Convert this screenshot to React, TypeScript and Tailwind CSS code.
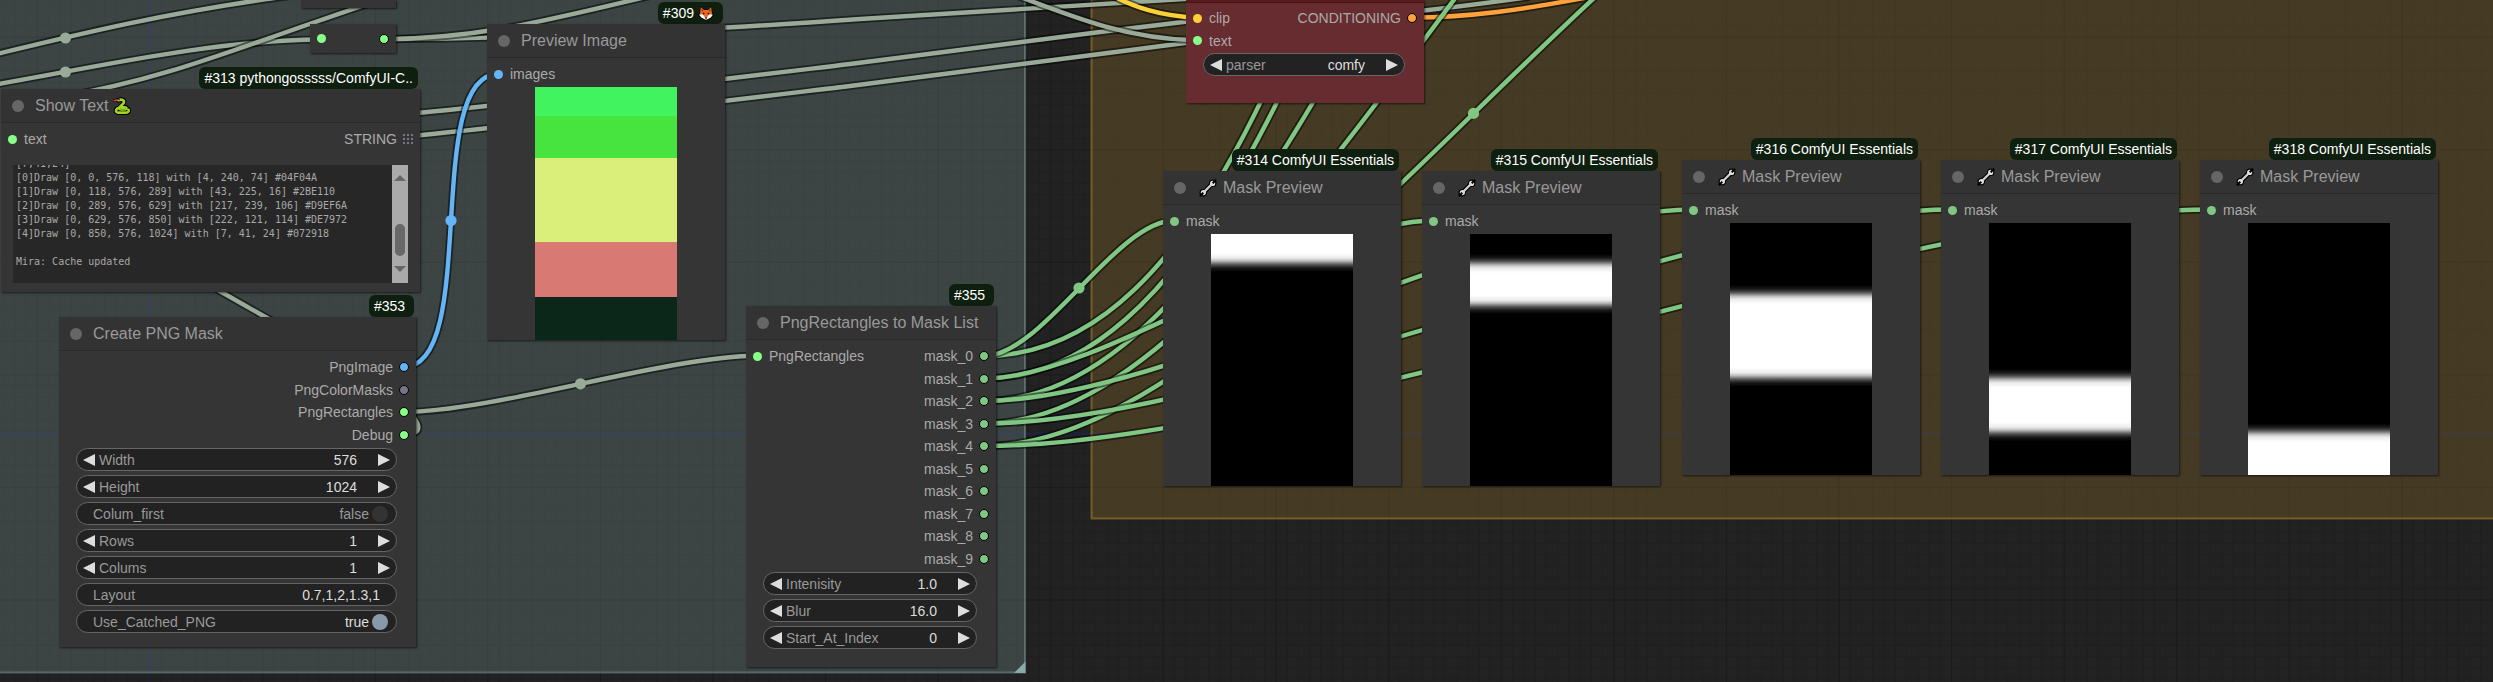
import { useLayoutEffect, useRef, type ReactNode } from "react";

/* ---------- graph data ---------- */

const GREEN = "#81c784";
const STRING_LINK = "#99aa99";
const IMAGE = "#64b5f6";

type Point = [number, number];

const maskOut = (i: number): Point => [984, 356 + 22.5 * i];

/* Spline whose handles are a quarter of the distance between both slots. */
function spline([x1, y1]: Point, [x2, y2]: Point) {
  const h = Math.hypot(x2 - x1, y2 - y1) * 0.25;
  return `M${x1} ${y1} C${x1 + h} ${y1} ${x2 - h} ${y2} ${x2} ${y2}`;
}

const links: { d: string; color: string; dot?: Point }[] = [
  { d: "M-20 58 C40 44 150 14 290 -4", color: STRING_LINK, dot: [65.5, 38] },
  { d: "M-20 87 C80 71 200 41 320 39.5", color: STRING_LINK, dot: [65.5, 72] },
  { d: "M60 97 C170 78 230 50 380 0", color: STRING_LINK },
  { d: "M383.5 39.3 C560 38 700 30 860 19 L1200 -2", color: STRING_LINK },
  { d: "M383.5 39.3 C480 38 540 22 650 -4", color: STRING_LINK },
  { d: "M400 114.5 C520 104 700 82 850 64 L1100 32 L1200 20", color: STRING_LINK },
  { d: "M400 137 C520 126 700 104 850 86 L1100 54 L1200 41", color: STRING_LINK },
  { d: "M404 434.5 C440 434.5 414 400 260 314 L195 277", color: STRING_LINK },
  { d: "M1400 13 C1450 8 1480 4 1530 -3", color: STRING_LINK },
  { d: "M1010 -7 C1080 20 1130 39 1197 40.3", color: STRING_LINK },
  { d: "M1105 -8 C1135 8 1160 16 1197 17.7", color: "#fdd037" },
  { d: "M1412 17.5 C1470 17.5 1520 10 1595 -4", color: "#ffa23c" },
  { d: spline([403.5, 412], [757.5, 355.7]), color: STRING_LINK, dot: [580.5, 383.8] },
  { d: spline([403.5, 367], [498.5, 74]), color: IMAGE, dot: [451, 220.5] },
  { d: spline(maskOut(0), [1906, -1200]), color: GREEN },
  { d: spline(maskOut(1), [1906, -1000]), color: GREEN },
  { d: spline(maskOut(2), [1906, -680]), color: GREEN },
  { d: spline(maskOut(3), [1906, -400]), color: GREEN },
  { d: spline(maskOut(4), [1963, -219]), color: GREEN, dot: [1473.5, 113.4] },
  { d: spline(maskOut(0), [1174.5, 220.5]), color: GREEN, dot: [1079, 288] },
  { d: spline(maskOut(1), [1433.5, 220.5]), color: GREEN },
  { d: spline(maskOut(2), [1693, 209.5]), color: GREEN },
  { d: spline(maskOut(3), [1952, 209.5]), color: GREEN },
  { d: spline(maskOut(4), [2211.5, 209.5]), color: GREEN },
];

const log = `[7,41,24]
[0]Draw [0, 0, 576, 118] with [4, 240, 74] #04F04A
[1]Draw [0, 118, 576, 289] with [43, 225, 16] #2BE110
[2]Draw [0, 289, 576, 629] with [217, 239, 106] #D9EF6A
[3]Draw [0, 629, 576, 850] with [222, 121, 114] #DE7972
[4]Draw [0, 850, 576, 1024] with [7, 41, 24] #072918

Mira: Cache updated

`;

/* ---------- canvas ---------- */

function Canvas() {
  return (
    <svg className="absolute inset-0 h-full w-full" aria-hidden="true">
      <defs>
        <pattern id="minor" x="149.5" y="36.5" width="11.26" height="11.26" patternUnits="userSpaceOnUse">
          <path d="M0.5 0V12M0 0.5H12" stroke="#000" strokeOpacity="0.1" fill="none" />
        </pattern>
        <pattern id="major" x="149.5" y="36.5" width="112.6" height="112.6" patternUnits="userSpaceOnUse">
          <path d="M0.5 0V113M0 0.5H113" stroke="#000" strokeOpacity="0.16" fill="none" />
        </pattern>
      </defs>
      <rect width="100%" height="100%" fill="url(#minor)" />
      <rect width="100%" height="100%" fill="url(#major)" />
      <path d="M149.5 0V1000M0 433.5H4000" stroke="#1e2240" strokeWidth="2" />
      <rect x="-10" y="-10" width="1035" height="682.5" fill="#88a8a5" fillOpacity="0.26" stroke="#88aaaa" strokeOpacity="0.45" strokeWidth="2" />
      <path d="M1025.5 661.5V673H1014Z" fill="#88aaaa" />
      <rect x="1091.5" y="-10" width="4000" height="528.5" fill="#b0892f" fillOpacity="0.25" stroke="#b58b2a" strokeOpacity="0.5" strokeWidth="2" />
      {links.map((l, i) => (
        <g key={i}>
          <path d={l.d} fill="none" stroke="#000" strokeOpacity="0.5" strokeWidth="8" />
          <path d={l.d} fill="none" stroke={l.color} strokeWidth="4.4" />
          {l.dot && <circle cx={l.dot[0]} cy={l.dot[1]} r="5.6" fill={l.color} />}
        </g>
      ))}
    </svg>
  );
}

/* ---------- icons ---------- */

function Wrench() {
  return (
    <svg viewBox="0 0 18 18" className="mr-1.5 h-[18px] w-[18px] shrink-0" aria-hidden="true">
      <path d="M4.4 13.6 13.6 4.4" stroke="#000" strokeWidth="4.6" />
      <circle cx="4.2" cy="13.8" r="3.7" fill="#000" />
      <circle cx="13.8" cy="4.2" r="3.7" fill="#000" />
      <path d="M5 13 13 5" stroke="#cfcfcf" strokeWidth="2.4" />
      <circle cx="4.4" cy="13.6" r="2.6" fill="#dcdcdc" />
      <circle cx="13.6" cy="4.4" r="2.6" fill="#dcdcdc" />
      <path d="M0.8 17.2 4.3 13.7M17.2 0.8 13.7 4.3" stroke="#000" strokeWidth="2" />
    </svg>
  );
}

function Snake() {
  const body = "M5.5 3.2C9.2 1.8 12 3.4 10.6 6.2C9.5 8.3 6 9.4 6 11.3C6 13 13.4 13 13.4 11.2C13.4 9.8 9.6 10.2 6.5 10.8C2.5 11.6 1.8 15.4 5.2 15.6H13.2C15.2 15.6 16 14.4 15.6 12.8";
  return (
    <svg viewBox="0 0 18 18" className="ml-1 h-[18px] w-[18px] shrink-0" aria-hidden="true">
      <path d={body} fill="none" stroke="#000" strokeWidth="4.8" strokeLinecap="round" strokeLinejoin="round" />
      <path d="M1.2 3.6 3.5 3" stroke="#000" strokeWidth="3" strokeLinecap="round" />
      <path d={body} fill="none" stroke="#a6d426" strokeWidth="2.6" strokeLinecap="round" strokeLinejoin="round" />
      <path d="M7 11.5C8 13 12 13 13.2 11.4M4 14.4H13" fill="none" stroke="#5f9a12" strokeWidth="0.7" />
      <path d="M1.2 3.6 3.8 3.2" stroke="#e0402c" strokeWidth="1.8" strokeLinecap="round" />
      <circle cx="6" cy="2.6" r="0.8" fill="#222" />
    </svg>
  );
}

function Fox() {
  return (
    <svg viewBox="0 0 16 16" className="ml-1 h-4 w-4 shrink-0" aria-hidden="true">
      <path d="M2.4 1 6 4H10L13.6 1 14.6 8.6 16 9.6 13.6 13 8 15.8 2.4 13 0 9.6 1.4 8.6Z" fill="#000" />
      <path d="M2.8 2 6 5H10L13.2 2 14 8.8 12.6 12 8 14.6 3.4 12 2 8.8Z" fill="#ee6a24" />
      <path d="M3.5 3.6 5.2 5.6 4 7ZM12.5 3.6 10.8 5.6 12 7Z" fill="#7a2b12" />
      <path d="M1 9.6 5 9.4 7 12.4 8 15 3.2 12.6ZM15 9.6 11 9.4 9 12.4 8 15 12.8 12.6Z" fill="#fff" />
      <path d="M4.8 7.8H6.4V9.2H4.8ZM9.6 7.8H11.2V9.2H9.6ZM6.8 12.4H9.2L8 14.2Z" fill="#111" />
    </svg>
  );
}

function ListDots() {
  return (
    <svg viewBox="0 0 10 10" className="h-2.5 w-2.5 shrink-0" aria-hidden="true">
      {[0, 1, 2].map((r) =>
        [0, 1, 2].map((c) => <rect key={`${r}${c}`} x={c * 4} y={r * 4} width="2" height="2" fill="#777788" />),
      )}
    </svg>
  );
}

/* ---------- node parts ---------- */

function Node({
  place,
  badge,
  title,
  children,
  tone = "bg-[#353535]",
}: {
  place: string;
  badge?: ReactNode;
  title?: ReactNode;
  children?: ReactNode;
  tone?: string;
}) {
  return (
    <section className={`absolute flex flex-col ${place}`}>
      {badge && (
        <div className="mr-0.5 flex h-[22px] items-center self-end whitespace-pre rounded-md bg-[#0f1f0f] px-[5px] text-sm text-white">
          {badge}
        </div>
      )}
      <div className={`flex flex-col shadow-[1px_1px_2px_rgba(0,0,0,0.6)] ${tone}`}>
        {title && (
          <header className="flex h-[34px] items-center border-b border-[#2a2a2a] bg-[#333333] pl-[11px]">
            <span className="mr-[11px] h-3 w-3 shrink-0 rounded-full bg-[#666666]" />
            <h2 className="flex items-center whitespace-nowrap text-base text-[#999999]">{title}</h2>
          </header>
        )}
        {children}
      </div>
    </section>
  );
}

function Input({ label, color }: { label: string; color: string }) {
  return (
    <div className="flex items-center gap-[7px] pl-[7px]">
      <span className={`h-[9px] w-[9px] shrink-0 rounded-full ${color}`} />
      <span>{label}</span>
    </div>
  );
}

function OutDot({ color }: { color: string }) {
  return <span className={`h-2.5 w-2.5 shrink-0 rounded-full border border-black ${color}`} />;
}

function Output({ label, color }: { label: string; color: string }) {
  return (
    <div className="flex items-center justify-end gap-1.5 pr-[7px]">
      <span>{label}</span>
      <OutDot color={color} />
    </div>
  );
}

const slotText = "text-sm leading-5 text-[#aaaaaa]";

const pill = "flex h-[23px] items-center rounded-full border border-[#666666] bg-[#222222] text-sm leading-5 text-[#999999]";

function Arrow({ back, label }: { back?: boolean; label: string }) {
  return (
    <button type="button" aria-label={label} className="shrink-0">
      <svg viewBox="0 0 12 12" className="h-3 w-3">
        <path d={back ? "M12 0V12L0 6Z" : "M0 0V12L12 6Z"} fill="#dddddd" />
      </svg>
    </button>
  );
}

function NumberWidget({ label, value }: { label: string; value: string }) {
  return (
    <div className={`${pill} px-1.5`}>
      <Arrow back label={`Decrease ${label}`} />
      <label htmlFor={label} className="ml-1">
        {label}
      </label>
      <input id={label} defaultValue={value} className="mr-[21px] w-0 min-w-0 flex-1 bg-transparent text-right text-[#dddddd] outline-none" />
      <Arrow label={`Increase ${label}`} />
    </div>
  );
}

function TextWidget({ label, value }: { label: string; value: string }) {
  return (
    <div className={`${pill} px-4`}>
      <label htmlFor={label}>{label}</label>
      <input id={label} defaultValue={value} className="w-0 min-w-0 flex-1 bg-transparent text-right text-[#dddddd] outline-none" />
    </div>
  );
}

function ToggleWidget({ label, on }: { label: string; on: boolean }) {
  return (
    <label className={`${pill} pl-4 pr-2`}>
      <span className="flex-1">{label}</span>
      <span className={on ? "text-[#dddddd]" : "text-[#999999]"}>{on ? "true" : "false"}</span>
      <input type="checkbox" defaultChecked={on} className="ml-[3px] h-4 w-4 appearance-none rounded-full bg-[#333333] checked:bg-[#8899aa]" />
    </label>
  );
}

function ComboWidget({ label, value }: { label: string; value: string }) {
  return (
    <div className={`${pill} px-1.5`}>
      <Arrow back label={`Previous ${label}`} />
      <label htmlFor={label} className="ml-1">
        {label}
      </label>
      <select id={label} defaultValue={value} className="mr-[21px] w-0 min-w-0 flex-1 appearance-none bg-transparent text-right text-[#dddddd] outline-none [text-align-last:right]">
        <option>{value}</option>
      </select>
      <Arrow label={`Next ${label}`} />
    </div>
  );
}

/* ---------- nodes ---------- */

function LogBox() {
  const ref = useRef<HTMLTextAreaElement>(null);
  useLayoutEffect(() => {
    if (ref.current) ref.current.scrollTop = 10;
  }, []);
  return (
    <div className="mx-3 mb-[9px] mt-4 flex h-[118px] bg-[#272727]">
      <textarea
        ref={ref}
        readOnly
        aria-label="Shown text"
        defaultValue={log}
        className="min-w-0 flex-1 resize-none overflow-hidden whitespace-pre bg-transparent px-[3px] pt-0.5 font-['DejaVu_Sans_Mono','Liberation_Mono',monospace] text-[10px] leading-[14px] text-[#a8a8a8] outline-none"
      />
      <div className="flex w-4 flex-col items-center bg-[#aaaaaa] py-2.5">
        <svg viewBox="0 0 12 6" className="h-1.5 w-3" aria-hidden="true">
          <path d="M6 0 12 6H0Z" fill="#686868" />
        </svg>
        <span className="mt-[43px] h-8 w-2.5 rounded-full bg-[#686868]" />
        <svg viewBox="0 0 12 6" className="mt-2.5 h-1.5 w-3" aria-hidden="true">
          <path d="M6 6 12 0H0Z" fill="#686868" />
        </svg>
      </div>
    </div>
  );
}

const HEIGHT = 252;

/* White band between two fractions of the picture, with soft edges. */
function maskGradient(from: number, to: number) {
  const steps: [number, number][] = [[-9, 0], [-5, 0.1], [-2, 0.3], [0, 0.5], [2, 0.72], [5, 0.92], [10, 1]];
  const grey = (v: number) => `rgb(${Math.round(v * 255)} ${Math.round(v * 255)} ${Math.round(v * 255)})`;
  const stops: string[] = [];
  if (from > 0) steps.forEach(([o, v]) => stops.push(`${grey(v)} ${from * HEIGHT + o}px`));
  else stops.push("#fff 0");
  if (to < 1) [...steps].reverse().forEach(([o, v]) => stops.push(`${grey(v)} ${to * HEIGHT - o}px`));
  else stops.push("#fff 100%");
  return `linear-gradient(${stops.join(", ")})`;
}

function MaskPreview({ place, id, from, to }: { place: string; id: number; from: number; to: number }) {
  return (
    <Node
      place={`w-[238px] ${place}`}
      badge={`#${id} ComfyUI Essentials`}
      title={
        <>
          <span className="w-0.5" />
          <Wrench />
          Mask Preview
        </>
      }
    >
      <div className={`pb-[3px] pt-1.5 ${slotText}`}>
        <Input label="mask" color="bg-[#81c784]" />
      </div>
      <div role="img" aria-label={`Mask ${id}`} className="h-[252px] w-[142px] self-center" style={{ backgroundImage: maskGradient(from, to) }} />
    </Node>
  );
}

const masks = [
  { id: 314, place: "left-[1163px] top-[149px]", from: 0, to: 118 / 1024 },
  { id: 315, place: "left-[1422px] top-[149px]", from: 118 / 1024, to: 289 / 1024 },
  { id: 316, place: "left-[1682px] top-[138px]", from: 289 / 1024, to: 629 / 1024 },
  { id: 317, place: "left-[1941px] top-[138px]", from: 629 / 1024, to: 850 / 1024 },
  { id: 318, place: "left-[2200px] top-[138px]", from: 850 / 1024, to: 1 },
];

export default function App() {
  return (
    <main className="relative min-h-screen w-full overflow-hidden bg-[#222222] font-['Liberation_Sans',Arial,sans-serif]">
      <Canvas />

      <Node place="left-[301px] top-0 w-[95px]">
        <div className="h-2" />
      </Node>
      <Node place="left-[310px] top-6 w-[86px]">
        <div className="flex h-[29px] items-center justify-between px-[7px]">
          <span className="h-[9px] w-[9px] rounded-full bg-[#88ff88]" />
          <OutDot color="bg-[#88ff88]" />
        </div>
      </Node>

      <Node
        place="left-px top-[67px] w-[419px]"
        badge="#313 pythongosssss/ComfyUI-C.."
        title={
          <>
            Show Text
            <Snake />
          </>
        }
      >
        <div className={`flex justify-between pt-1.5 ${slotText}`}>
          <Input label="text" color="bg-[#88ff88]" />
          <div className="flex items-center gap-1.5 pr-[7px]">
            STRING
            <ListDots />
          </div>
        </div>
        <LogBox />
      </Node>

      <Node
        place="left-[487px] top-0.5 w-[238px]"
        badge={
          <>
            #309
            <Fox />
            <span className="w-1" />
          </>
        }
        title="Preview Image"
      >
        <div className={`pb-[3px] pt-1.5 ${slotText}`}>
          <Input label="images" color="bg-[#64b5f6]" />
        </div>
        <div role="img" aria-label="Preview" className="flex w-[142px] flex-col self-center">
          <div className="h-[29px] bg-[#41f35f]" />
          <div className="h-[42px] bg-[#47e33f]" />
          <div className="h-[84px] bg-[#daef7a]" />
          <div className="h-[55px] bg-[#d87a73]" />
          <div className="h-[43px] bg-[#0b2719]" />
        </div>
      </Node>

      <Node place="left-[59px] top-[295px] w-[357px]" badge="#353 " title="Create PNG Mask">
        <div className={`grid h-[95px] grid-rows-4 pt-[5px] ${slotText}`}>
          <Output label="PngImage" color="bg-[#64b5f6]" />
          <Output label="PngColorMasks" color="bg-[#777788]" />
          <Output label="PngRectangles" color="bg-[#88ff88]" />
          <Output label="Debug" color="bg-[#88ff88]" />
        </div>
        <div className="flex flex-col gap-1 pb-3.5 pl-[17px] pr-[19px] pt-0.5">
          <NumberWidget label="Width" value="576" />
          <NumberWidget label="Height" value="1024" />
          <ToggleWidget label="Colum_first" on={false} />
          <NumberWidget label="Rows" value="1" />
          <NumberWidget label="Colums" value="1" />
          <TextWidget label="Layout" value="0.7,1,2,1.3,1" />
          <ToggleWidget label="Use_Catched_PNG" on />
        </div>
      </Node>

      <Node place="left-[746px] top-[284px] w-[250px]" badge="#355 " title="PngRectangles to Mask List">
        <div className={`grid h-[230px] grid-cols-2 grid-rows-10 pt-[5px] ${slotText}`}>
          <Input label="PngRectangles" color="bg-[#88ff88]" />
          {[0, 1, 2, 3, 4, 5, 6, 7, 8, 9].map((i) => (
            <div key={i} className="col-start-2 grid">
              <Output label={`mask_${i}`} color="bg-[#81c784]" />
            </div>
          ))}
        </div>
        <div className="flex flex-col gap-1 pb-[18px] pl-[17px] pr-[19px] pt-0.5">
          <NumberWidget label="Intenisity" value="1.0" />
          <NumberWidget label="Blur" value="16.0" />
          <NumberWidget label="Start_At_Index" value="0" />
        </div>
      </Node>

      <Node place="left-[1186px] top-0 w-[238px]" tone="bg-[#672c2f]">
        <div className="h-[3px] border-b border-[#451415] bg-[#571b1d]" />
        <div className={`grid h-[49px] grid-cols-[auto_1fr] grid-rows-2 pt-1 ${slotText}`}>
          <Input label="clip" color="bg-[#fdd037]" />
          <Output label="CONDITIONING" color="bg-[#ffa23c]" />
          <Input label="text" color="bg-[#88ff88]" />
        </div>
        <div className="pb-[27px] pl-[17px] pr-[19px] pt-px">
          <ComboWidget label="parser" value="comfy" />
        </div>
      </Node>

      {masks.map((m) => (
        <MaskPreview key={m.id} {...m} />
      ))}
    </main>
  );
}
